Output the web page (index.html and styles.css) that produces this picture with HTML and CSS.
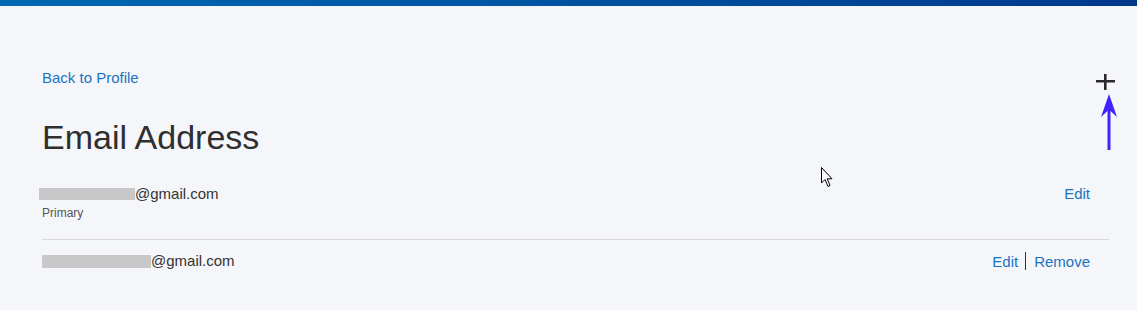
FILE: index.html
```html
<!DOCTYPE html>
<html lang="en">
<head>
<meta charset="utf-8">
<title>Email Address</title>
<link rel="stylesheet" href="styles.css">
</head>
<body>
<div class="topbar"></div>
<main class="page">
  <div class="header">
    <a class="back" href="#">Back to Profile</a>
    <button class="add" aria-label="Add email">
      <svg width="19" height="17" viewBox="0 0 19 17"><rect x="0" y="6" width="19" height="2.5" fill="#2a2a2a"/><rect x="8" y="0" width="2.6" height="16" fill="#2a2a2a"/></svg>
    </button>
  </div>
  <h1 class="title">Email Address</h1>
  <ul class="emails">
    <li class="row">
      <div class="info">
        <div class="addr"><span class="redact r1"></span>@gmail.com</div>
        <div class="tag">Primary</div>
      </div>
      <div class="actions"><a href="#">Edit</a></div>
    </li>
    <li class="row second">
      <div class="info">
        <div class="addr"><span class="redact r2"></span>@gmail.com</div>
      </div>
      <div class="actions"><a href="#">Edit</a><span class="sep"></span><a href="#">Remove</a></div>
    </li>
  </ul>
</main>
<svg class="arrow" width="18" height="58" viewBox="0 0 18 58"><polygon points="9,0 17,23 10.5,17 10.5,56 7.5,56 7.5,17 1,23" fill="#4422ff"/></svg>
<svg class="cursor" width="14" height="22" viewBox="0 0 14 22"><path d="M0.5 0.5 L0.5 16 L4 12.5 L7 19.5 L9 18.5 L6.2 11.8 L11 11.8 Z" fill="#fff" stroke="#000" stroke-width="1"/></svg>
</body>
</html>
```
FILE: styles.css
```css
html, body {
  margin: 0;
  padding: 0;
}
body {
  background: #f5f6fa;
  font-family: "Liberation Sans", Arial, sans-serif;
  color: #333;
  height: 310px;
  overflow: hidden;
  position: relative;
}
.topbar {
  height: 6px;
  background: linear-gradient(90deg, #0068b1 0%, #0055a3 45%, #00388a 100%);
}
.page {
  padding: 63px 28px 0 42px;
}
.header {
  display: flex;
  justify-content: space-between;
  align-items: flex-start;
}
.back {
  font-size: 15px;
  line-height: 17px;
  color: #1a73c2;
  text-decoration: none;
}
.add {
  border: 0;
  background: none;
  padding: 0;
  margin: 5px -6px 0 0;
  width: 19px;
  height: 17px;
  display: block;
}
.add svg { display: block; }
.title {
  margin: 28px 0 0;
  font-weight: normal;
  font-size: 34px;
  line-height: 37px;
  color: #2f2f2f;
}
.emails {
  list-style: none;
  margin: 29px 0 0;
  padding: 0;
}
.row {
  display: flex;
  justify-content: space-between;
  align-items: flex-start;
  padding: 0 19px 19px 0;
}
.row.second {
  border-top: 1px solid #d9d9d9;
  padding-top: 12px;
}
.addr {
  font-size: 15px;
  line-height: 17px;
  color: #333;
  display: flex;
  align-items: center;
}
.redact {
  display: inline-block;
  background: #c8c8c8;
}
.r1 {
  width: 96px;
  height: 12px;
  margin-left: -3px;
}
.r2 {
  width: 109px;
  height: 13px;
  margin-top: 2px;
}
.tag {
  margin-top: 4px;
  font-size: 12px;
  line-height: 14px;
  color: #555;
}
.actions {
  display: flex;
  align-items: center;
  font-size: 15px;
  line-height: 17px;
}
.actions a {
  color: #1a73c2;
  text-decoration: none;
}
.sep {
  width: 1px;
  height: 18px;
  background: #333;
  margin: 0 8px 0 7px;
}
.arrow {
  position: absolute;
  left: 1100px;
  top: 94px;
}
.cursor {
  position: absolute;
  left: 821px;
  top: 167px;
}
```
